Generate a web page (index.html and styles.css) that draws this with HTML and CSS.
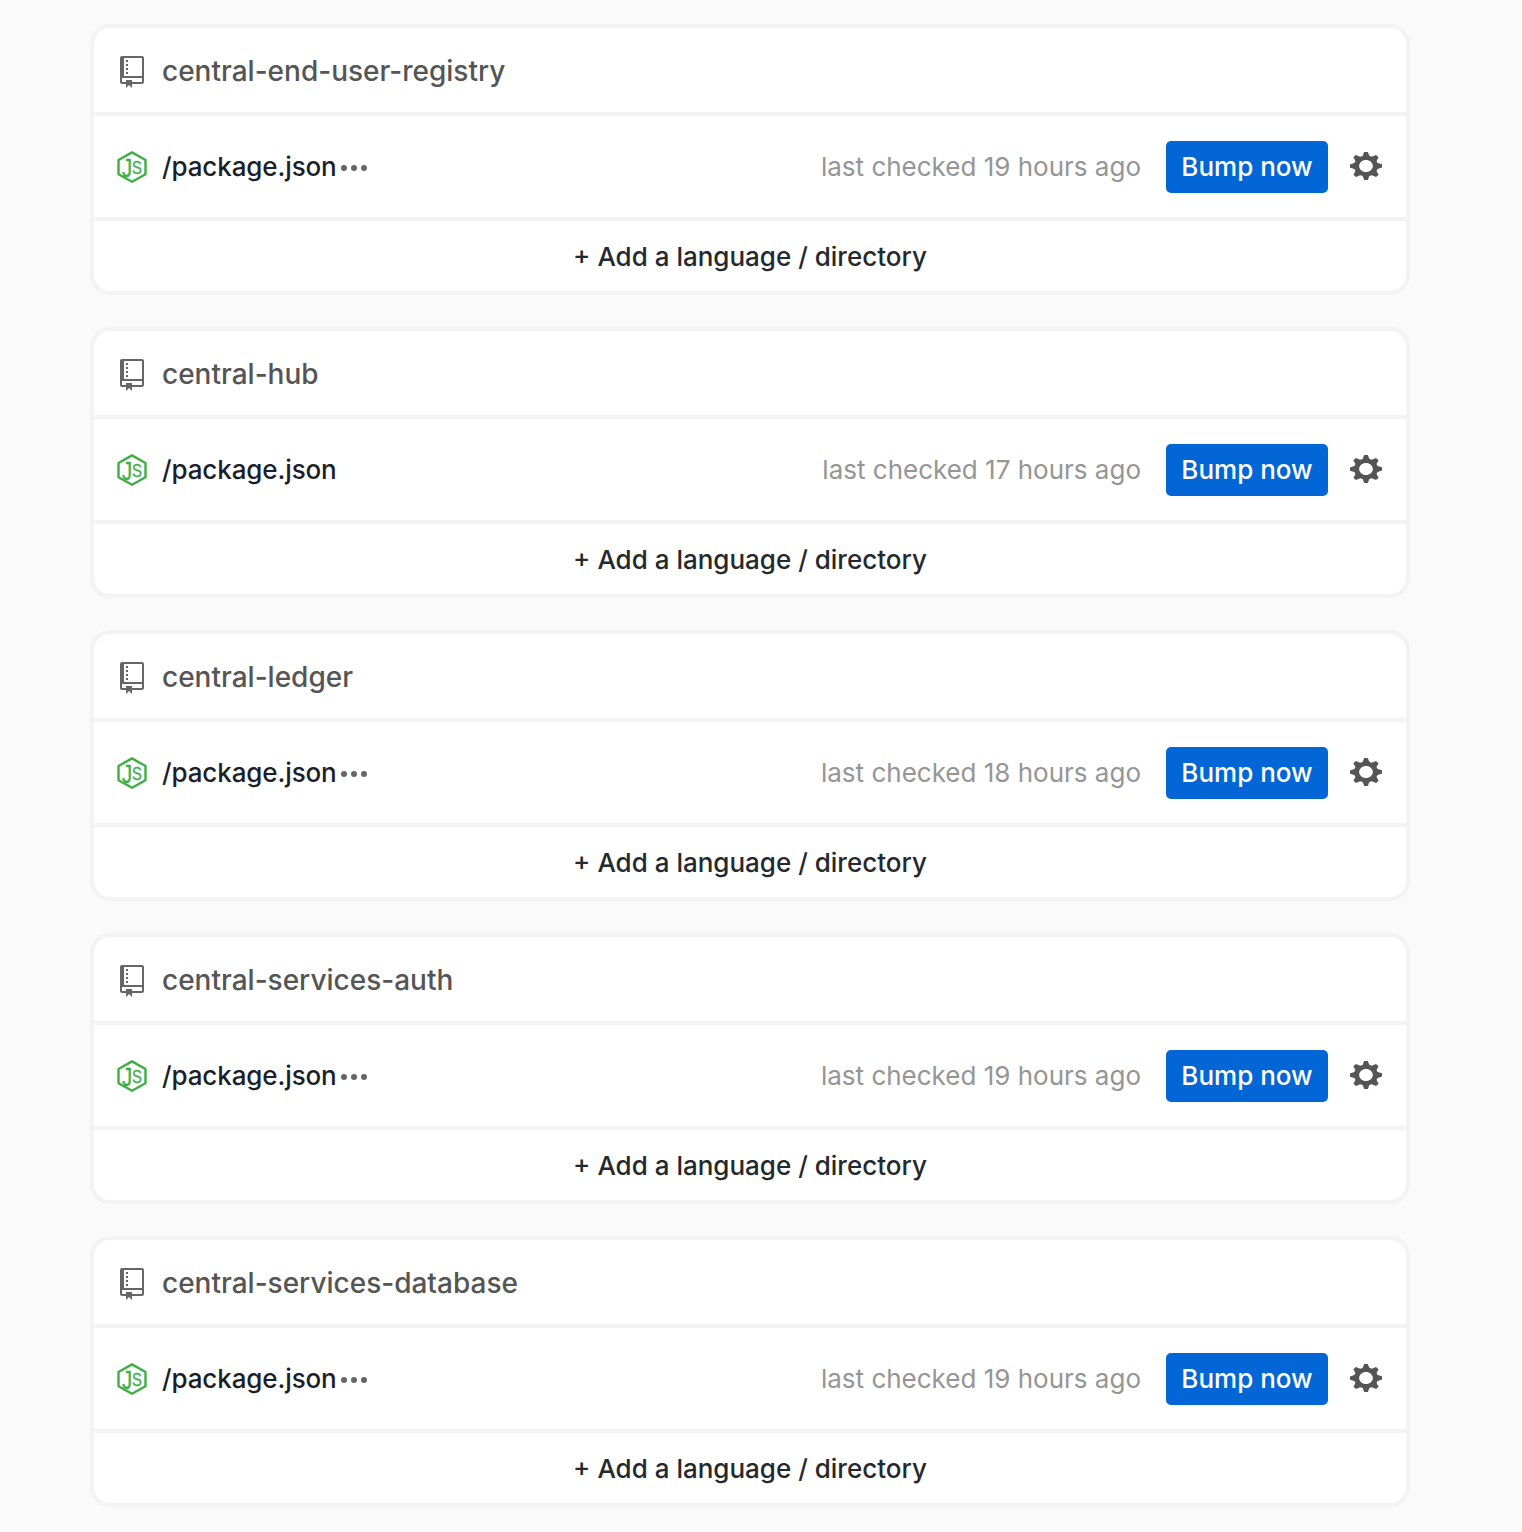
FILE: index.html
```html
<!doctype html>
<html>
<head>
<meta charset="utf-8">
<link rel="stylesheet" href="styles.css">
<title>Repositories</title>
</head>
<body>
<svg class="defs" width="0" height="0">
  <symbol id="repo" viewBox="0 0 12 16"><path d="M4 9H3V8h1v1zm0-3H3v1h1V6zm0-2H3v1h1V4zm0-2H3v1h1V2zm8-1v12c0 .55-.45 1-1 1H6v2l-1.5-1.5L3 16v-2H1c-.55 0-1-.45-1-1V1c0-.55.45-1 1-1h10c.55 0 1 .45 1 1zm-1 10H1v2h2v-1h3v1h5v-2zm0-10H2v9h9V1z"/></symbol>
  <symbol id="gear" viewBox="0 0 14 16" preserveAspectRatio="none"><path d="M14 8.77v-1.6l-1.94-.64-.45-1.09.88-1.84-1.13-1.13-1.81.91-1.09-.45-.69-1.92h-1.6l-.63 1.94-1.11.45-1.84-.88-1.13 1.13.91 1.81-.45 1.09L0 7.23v1.59l1.94.64.45 1.09-.88 1.84 1.13 1.13 1.81-.91 1.09.45.69 1.92h1.59l.63-1.94 1.11-.45 1.84.88 1.13-1.13-.92-1.81.47-1.09L14 8.75v.02zM7 11c-1.66 0-3-1.34-3-3s1.34-3 3-3 3 1.34 3 3-1.34 3-3 3z"/></symbol>
  <symbol id="dots" viewBox="0 0 26 6"><circle cx="3" cy="3" r="3"/><circle cx="13" cy="3" r="3"/><circle cx="23" cy="3" r="3"/></symbol>
</svg>

<div class="list">

  <section class="card">
    <header class="card-head">
      <svg class="icon-repo"><use href="#repo"/></svg>
      <span class="repo-name">central-end-user-registry</span>
    </header>
    <div class="dep-row">
      <svg class="icon-js" viewBox="0 0 30 32"><polygon class="hex" points="15,1.4 28.5,9 28.5,23.2 15,30.8 1.5,23.2 1.5,9"/><text class="js" x="5" y="25.5" textLength="20" lengthAdjust="spacingAndGlyphs">J<tspan class="js-s" dy="-3">S</tspan></text></svg>
      <span class="dep-path">/package.json</span>
      <svg class="icon-dots"><use href="#dots"/></svg>
      <span class="checked">last checked 19 hours ago</span>
      <button class="bump">Bump now</button>
      <svg class="icon-gear"><use href="#gear"/></svg>
    </div>
    <div class="add-row">+ Add a language / directory</div>
  </section>

  <section class="card">
    <header class="card-head">
      <svg class="icon-repo"><use href="#repo"/></svg>
      <span class="repo-name">central-hub</span>
    </header>
    <div class="dep-row">
      <svg class="icon-js" viewBox="0 0 30 32"><polygon class="hex" points="15,1.4 28.5,9 28.5,23.2 15,30.8 1.5,23.2 1.5,9"/><text class="js" x="5" y="25.5" textLength="20" lengthAdjust="spacingAndGlyphs">J<tspan class="js-s" dy="-3">S</tspan></text></svg>
      <span class="dep-path">/package.json</span>
      <span class="checked">last checked 17 hours ago</span>
      <button class="bump">Bump now</button>
      <svg class="icon-gear"><use href="#gear"/></svg>
    </div>
    <div class="add-row">+ Add a language / directory</div>
  </section>

  <section class="card">
    <header class="card-head">
      <svg class="icon-repo"><use href="#repo"/></svg>
      <span class="repo-name">central-ledger</span>
    </header>
    <div class="dep-row">
      <svg class="icon-js" viewBox="0 0 30 32"><polygon class="hex" points="15,1.4 28.5,9 28.5,23.2 15,30.8 1.5,23.2 1.5,9"/><text class="js" x="5" y="25.5" textLength="20" lengthAdjust="spacingAndGlyphs">J<tspan class="js-s" dy="-3">S</tspan></text></svg>
      <span class="dep-path">/package.json</span>
      <svg class="icon-dots"><use href="#dots"/></svg>
      <span class="checked">last checked 18 hours ago</span>
      <button class="bump">Bump now</button>
      <svg class="icon-gear"><use href="#gear"/></svg>
    </div>
    <div class="add-row">+ Add a language / directory</div>
  </section>

  <section class="card">
    <header class="card-head">
      <svg class="icon-repo"><use href="#repo"/></svg>
      <span class="repo-name">central-services-auth</span>
    </header>
    <div class="dep-row">
      <svg class="icon-js" viewBox="0 0 30 32"><polygon class="hex" points="15,1.4 28.5,9 28.5,23.2 15,30.8 1.5,23.2 1.5,9"/><text class="js" x="5" y="25.5" textLength="20" lengthAdjust="spacingAndGlyphs">J<tspan class="js-s" dy="-3">S</tspan></text></svg>
      <span class="dep-path">/package.json</span>
      <svg class="icon-dots"><use href="#dots"/></svg>
      <span class="checked">last checked 19 hours ago</span>
      <button class="bump">Bump now</button>
      <svg class="icon-gear"><use href="#gear"/></svg>
    </div>
    <div class="add-row">+ Add a language / directory</div>
  </section>

  <section class="card">
    <header class="card-head">
      <svg class="icon-repo"><use href="#repo"/></svg>
      <span class="repo-name">central-services-database</span>
    </header>
    <div class="dep-row">
      <svg class="icon-js" viewBox="0 0 30 32"><polygon class="hex" points="15,1.4 28.5,9 28.5,23.2 15,30.8 1.5,23.2 1.5,9"/><text class="js" x="5" y="25.5" textLength="20" lengthAdjust="spacingAndGlyphs">J<tspan class="js-s" dy="-3">S</tspan></text></svg>
      <span class="dep-path">/package.json</span>
      <svg class="icon-dots"><use href="#dots"/></svg>
      <span class="checked">last checked 19 hours ago</span>
      <button class="bump">Bump now</button>
      <svg class="icon-gear"><use href="#gear"/></svg>
    </div>
    <div class="add-row">+ Add a language / directory</div>
  </section>

</div>
</body>
</html>
```

FILE: styles.css
```css
html {
    height: 100%;
}
body {
    margin: 0;
    height: 100%;
    overflow: hidden;
    background-color: #fafafa;
    font-family: Inter, "Noto Sans", sans-serif;
    font-size: 26px;
    color: #24292e;
}
.defs {
    position: absolute;
}
.list {
    display: flex;
    flex-direction: column;
    gap: 32px;
    width: 1320px;
    margin-left: 90px;
    padding-top: 24px;
}
.card {
    box-sizing: border-box;
    height: 271px;
    display: flex;
    flex-direction: column;
    background-color: white;
    border: 4px solid #f3f3f3;
    border-radius: 20px;
}
.card-head {
    height: 80px;
    flex: none;
    display: flex;
    align-items: center;
    padding: 4px 0 0 26px;
    border-bottom: 4px solid #f3f3f3;
}
.icon-repo {
    width: 24px;
    height: 32px;
    margin-right: 18px;
    fill: #666;
}
.repo-name {
    margin-bottom: 2px;
    color: #555;
    font-size: 28px;
    font-weight: 500;
}
.dep-row {
    height: 101px;
    flex: none;
    display: flex;
    align-items: center;
    padding: 0 24px 0 23px;
    border-bottom: 4px solid #f3f3f3;
}
.icon-js {
    width: 30px;
    height: 32px;
    margin-right: 15px;
}
.hex {
    fill: none;
    stroke: #3fae45;
    stroke-width: 2.4;
    stroke-linejoin: round;
}
.js {
    fill: #3fae45;
    stroke: #3fae45;
    stroke-width: 0.35px;
    font-family: "Liberation Sans", sans-serif;
    font-size: 26px;
}
.js-s {
    font-size: 19px;
}
.dep-path {
    color: #1b1f2b;
    font-weight: 500;
    letter-spacing: -0.12px;
}
.icon-dots {
    width: 26px;
    height: 6px;
    margin: 2px 0 0 4px;
    fill: #666;
}
.checked {
    margin-left: auto;
    color: #959595;
}
.bump {
    height: 52px;
    width: 162px;
    margin-left: 25px;
    padding: 0;
    border: 0;
    border-radius: 5px;
    background-color: #0366d6;
    color: white;
    font: 500 26px Inter, sans-serif;
}
.icon-gear {
    width: 32px;
    height: 32px;
    margin: 0 0 2px 22px;
    fill: #555;
}
.add-row {
    flex: 1;
    display: flex;
    align-items: center;
    justify-content: center;
    font-weight: 500;
}
```
